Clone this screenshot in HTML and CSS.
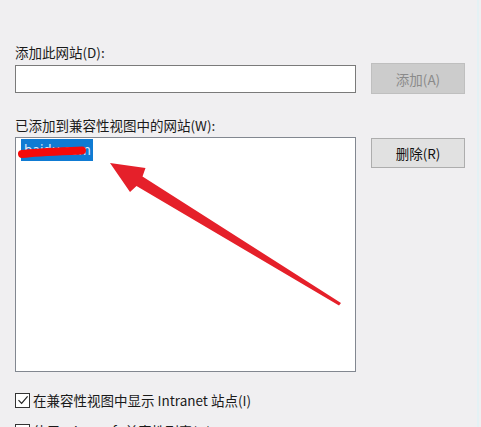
FILE: index.html
```html
<!DOCTYPE html>
<html lang="zh-CN">
<head>
<meta charset="utf-8">
<link rel="stylesheet" href="styles.css">
</head>
<body>
<div class="dialog">
  <div class="label first">添加此网站(D):</div>
  <div class="row center">
    <div class="textbox"></div>
    <div class="btn disabled">添加(A)</div>
  </div>
  <div class="label second">已添加到兼容性视图中的网站(W):</div>
  <div class="row top">
    <div class="listbox">
      <div class="item"><span class="sel">baidu.com</span></div>
    </div>
    <div class="btn">删除(R)</div>
  </div>
  <div class="check c1"><span class="box checked"><svg viewBox="0 0 14 14" width="14" height="14"><path d="M2.5 7.2 L5.6 10.3 L11.6 3.4" fill="none" stroke="#222" stroke-width="1.2"/></svg></span><span>在兼容性视图中显示 Intranet 站点(I)</span></div>
  <div class="check c2"><span class="box"></span><span>使用 Microsoft 兼容性列表(U)</span></div>
  <svg class="overlay" viewBox="0 0 481 427" width="481" height="427">
    <path d="M22 154 C 36 152, 56 151.5, 82 150.5" fill="none" stroke="#f50a0a" stroke-width="8" stroke-linecap="round"/>
    <path d="M110 163 L145.5 168 L142.5 176.5 L341 303 L339 305.5 L136.5 186 L130 192 Z" fill="#e5202a"/>
  </svg>
</div>
</body>
</html>
```
FILE: styles.css
```css
html, body {
  margin: 0;
  padding: 0;
}
body {
  width: 481px;
  height: 427px;
  overflow: hidden;
  background: #f0eff1;
  font-family: "Noto Sans CJK SC", "Noto Sans", sans-serif;
  font-size: 13.5px;
  color: #1a1a1a;
}
.dialog {
  position: relative;
  width: 479px;
  height: 427px;
  padding-left: 15px;
  box-sizing: border-box;
  border-right: 2px solid #e4f1f4;
}
.label {
  line-height: 20px;
  height: 20px;
  white-space: nowrap;
}
.label.first {
  padding-top: 42px;
}
.label.second {
  margin-top: 21px;
}
.row {
  display: flex;
  gap: 15px;
}
.row.center {
  align-items: center;
  margin-top: 1px;
}
.row.top {
  align-items: flex-start;
  margin-top: 2px;
}
.textbox {
  width: 341px;
  height: 28px;
  box-sizing: border-box;
  background: #fff;
  border: 1px solid #7a7a7a;
}
.btn {
  width: 94px;
  height: 31px;
  box-sizing: border-box;
  background: #e1e1e1;
  border: 1px solid #adadad;
  display: flex;
  align-items: center;
  justify-content: center;
  color: #111;
}
.row.top .btn {
  margin-top: 1px;
  height: 30px;
}
.btn.disabled {
  background: #cccccc;
  border-color: #bfbfbf;
  color: #8a8a8a;
}
.listbox {
  width: 341px;
  height: 235px;
  box-sizing: border-box;
  background: #fff;
  border: 1px solid #828790;
  padding: 1px 0 0 5px;
}
.item {
  height: 22px;
  display: flex;
}
.sel {
  display: inline-block;
  width: 72px;
  height: 22px;
  line-height: 22px;
  padding-left: 3px;
  box-sizing: border-box;
  background: #0f7bd3;
  color: #dfeaf7;
  font-family: "Noto Sans", sans-serif;
  font-size: 13.5px;
  overflow: hidden;
}
.check {
  display: flex;
  align-items: center;
  gap: 3px;
  height: 20px;
  line-height: 20px;
  white-space: nowrap;
}
.check.c1 {
  margin-top: 18px;
}
.check.c2 {
  margin-top: 11px;
}
.box {
  width: 15px;
  height: 15px;
  box-sizing: border-box;
  border: 1px solid #333;
  background: #fff;
  display: flex;
  flex: none;
}
.box svg {
  display: block;
  margin: -0.5px;
}
.overlay {
  position: absolute;
  left: 0;
  top: 0;
}
```
